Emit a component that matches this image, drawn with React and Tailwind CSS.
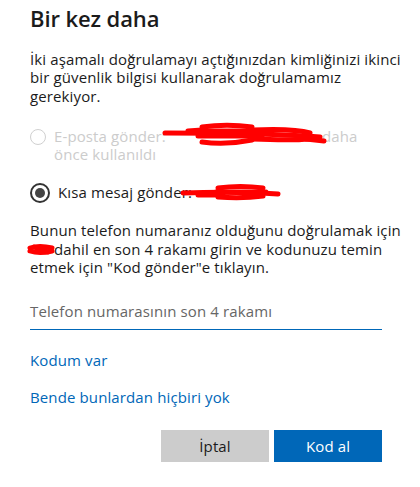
import React from 'react';

function Scribble({ w, h, paths, className, sw = 5 }) {
  return (
    <svg width={w} height={h} viewBox={`0 0 ${w} ${h}`} className={className}>
      {paths.map((d, i) => (
        <path key={i} d={d} fill="none" stroke="#ff0000" strokeWidth={sw} strokeLinecap="round" strokeLinejoin="round" />
      ))}
    </svg>
  );
}

export default function App() {
  const font = { fontFamily: '"Open Sans", "Noto Sans", sans-serif' };

  return (
    <div style={font} className="w-[420px] h-[487px] bg-white pl-[30px] pr-[38px] pt-[4px] text-[15px] tracking-[0.12px] text-[#1b1b1b]">
      <h1 className="text-[22px] leading-[28px] font-semibold tracking-[-0.1px]">Bir kez daha</h1>

      <p className="mt-[18px] leading-[18.3px] whitespace-nowrap">
        İki aşamalı doğrulamayı açtığınızdan kimliğinizi ikinci
        <br />
        bir güvenlik bilgisi kullanarak doğrulamamız
        <br />
        gerekiyor.
      </p>

      <div className="mt-[22px] flex items-start gap-[8px] text-[#cccccc]">
        <span className="mt-[2px] w-[16px] h-[16px] rounded-full border border-[#d0d0d0] bg-white shrink-0" />
        <div className="leading-[18.3px] whitespace-nowrap">
          <div className="flex items-center">
            <span>E-posta gönder:</span>
            <span className="relative inline-block w-[156px] h-[18px]">
              <Scribble
                w={170}
                h={26}
                className="absolute left-[-6px] top-[-5px]"
                paths={[
                  'M5 11 C60 11 120 12 160 15',
                  'M42 5 C57 3 77 3 92 5',
                  'M40 9 L98 9',
                  'M38 14 L102 14',
                  'M42 20 C57 22 77 21 92 18',
                  'M92 8 C115 7 140 8 150 11',
                  'M92 17 C115 18 138 18 150 17',
                  'M146 17 L164 19',
                  'M28 9 L42 8',
                ]}
              />
            </span>
            <span>daha</span>
          </div>
          <div>önce kullanıldı</div>
        </div>
      </div>

      <div className="mt-[20px] flex items-start gap-[8px]">
        <span className="w-[20px] h-[20px] rounded-full border-2 border-[#333333] bg-white shrink-0 flex items-center justify-center">
          <span className="w-[10px] h-[10px] rounded-full bg-[#444444]" />
        </span>
        <div className="leading-[18.3px] whitespace-nowrap flex items-center">
          <span>Kısa mesaj gönder:</span>
          <span className="relative inline-block w-[90px] h-[18px]">
            <Scribble
              w={105}
              h={20}
              className="absolute left-[-14px] top-[-1px]"
              paths={[
                'M5 10 C35 9 70 9 100 11',
                'M40 5 C55 3 70 3 85 5',
                'M38 9 L88 9',
                'M40 14 C55 15 70 15 85 13',
                'M20 12 L45 12',
              ]}
            />
          </span>
        </div>
      </div>

      <p className="mt-[18px] leading-[18.3px] whitespace-nowrap">
        Bunun telefon numaranız olduğunu doğrulamak için
        <br />
        <span className="relative inline-block w-[24px] h-[12px] align-[-1px]">
          <Scribble
            w={30}
            h={16}
            className="absolute left-[-4px] top-[-3px]"
            paths={['M4 7 C10 5 18 5 26 7', 'M4 10 C10 12 18 12 26 10', 'M8 6 L22 11']}
          />
        </span>
        dahil en son 4 rakamı girin ve kodunuzu temin
        <br />
        etmek için "Kod gönder"e tıklayın.
      </p>

      <div className="mt-[26px] border-b border-[#0067b8] h-[28px] flex items-start">
        <span className="text-[#666666] leading-[18px]">Telefon numarasının son 4 rakamı</span>
      </div>

      <div className="mt-[21px] text-[#0067b8] leading-[18px]">Kodum var</div>
      <div className="mt-[19px] text-[#0067b8] leading-[18px]">Bende bunlardan hiçbiri yok</div>

      <div className="mt-[24px] flex justify-end gap-[5px]">
        <button className="w-[108px] h-[32px] bg-[#cccccc] text-[#1b1b1b] text-[15px]">İptal</button>
        <button className="w-[108px] h-[32px] bg-[#0067b8] text-white text-[15px]">Kod al</button>
      </div>
    </div>
  );
}
